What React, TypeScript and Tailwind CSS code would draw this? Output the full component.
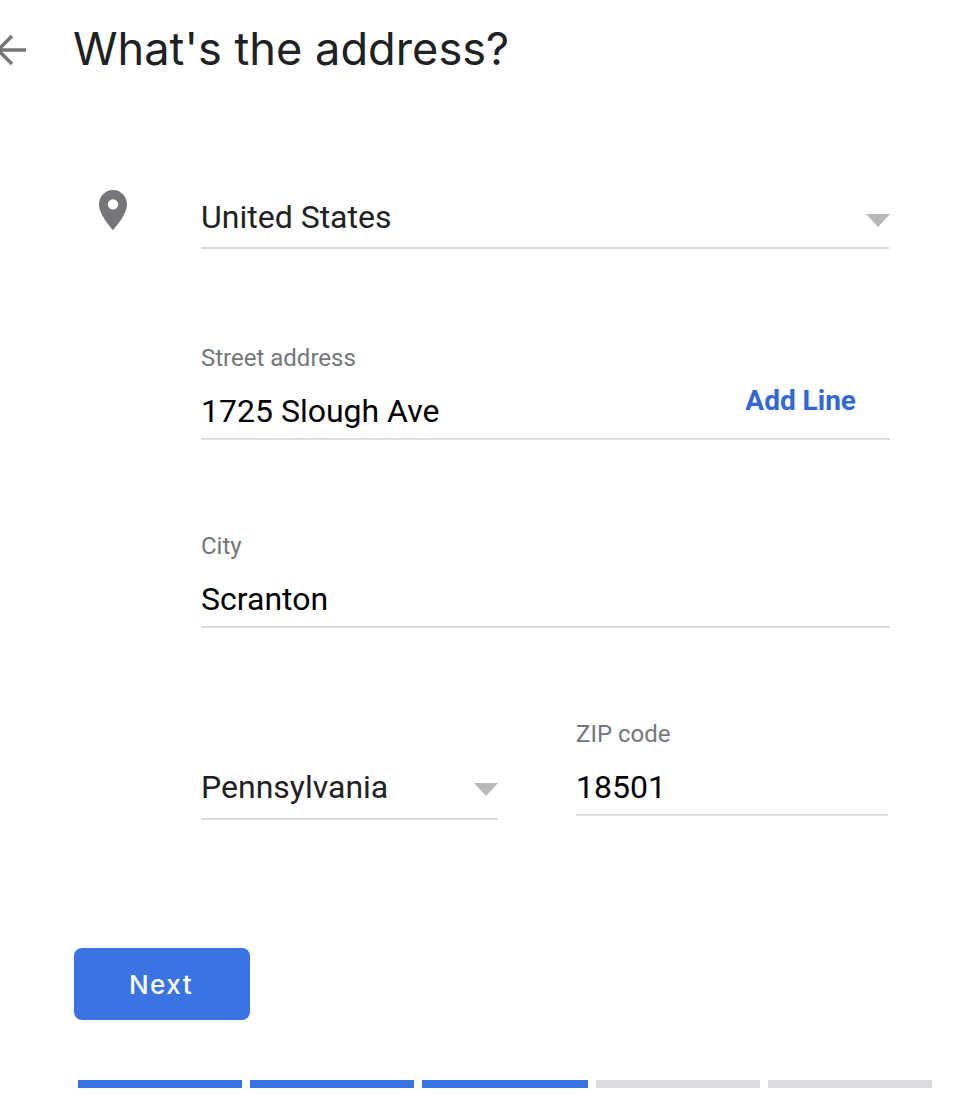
const PROGRESS = [
  { width: 'w-[164px]', done: true },
  { width: 'w-[164px]', done: true },
  { width: 'w-[166px]', done: true },
  { width: 'w-[164px]', done: false },
  { width: 'w-[164px]', done: false },
];

function Caret() {
  return (
    <svg width="24" height="13" viewBox="0 0 24 13" className="shrink-0">
      <path d="M0 0h24L12 13z" fill="#b8b8b8" />
    </svg>
  );
}

function BackArrow() {
  return (
    <svg width="26" height="32" viewBox="0 0 26 32" className="shrink-0">
      <path d="M26 16H0M12 2L-2 16l14 14" fill="none" stroke="#75767a" strokeWidth="3.5" />
    </svg>
  );
}

function Pin() {
  return (
    <svg width="28" height="40" viewBox="0 0 28 40">
      <path
        fillRule="evenodd"
        d="M14 0C6.3 0 0 6.4 0 14.4 0 25.2 14 40 14 40s14-14.8 14-25.6C28 6.4 21.7 0 14 0zm0 19.6a5.2 5.2 0 1 1 0-10.4 5.2 5.2 0 0 1 0 10.4z"
        fill="#75767a"
      />
    </svg>
  );
}

function Field({ label, value, children }: { label: string; value: string; children?: React.ReactNode }) {
  return (
    <div className="flex h-[95px] flex-col border-b-2 border-[#dcdce0]">
      <p className="-mt-px h-[45px] text-[24px] leading-[28px] text-[#75767a]">{label}</p>
      <div className="flex items-start justify-between">
        <span className="text-[32px] leading-[44px] text-black">{value}</span>
        {children}
      </div>
    </div>
  );
}

export default function App() {
  return (
    <div className="h-[1110px] w-[962px] bg-white font-['Roboto',sans-serif]">
      <header className="flex h-[98px] items-start pt-[20px]">
        <span className="mt-[14px]">
          <BackArrow />
        </span>
        <h1 className="ml-[47px] font-['Inter',sans-serif] text-[45.2px] leading-[58px] text-[#202124]">
          What's the address?
        </h1>
      </header>

      <div className="ml-[99px] mt-[92px] flex">
        <div className="w-[102px] shrink-0">
          <Pin />
        </div>
        <div className="flex h-[59px] w-[688px] items-start justify-between border-b-2 border-[#dcdce0]">
          <span className="text-[32px] leading-[54px] text-[#202124]">United States</span>
          <span className="mr-[-1px] mt-[24px]">
            <Caret />
          </span>
        </div>
      </div>

      <div className="ml-[201px] mt-[96px] w-[689px]">
        <Field label="Street address" value="1725 Slough Ave">
          <span className="mr-[34px] mt-[-6px] text-[28px] font-bold leading-[36px] text-[#3367d6]">Add Line</span>
        </Field>
      </div>

      <div className="ml-[201px] mt-[93px] w-[689px]">
        <Field label="City" value="Scranton" />
      </div>

      <div className="ml-[201px] mt-[93px] flex items-start gap-[78px]">
        <div className="mt-[44px] flex h-[55px] w-[297px] items-start justify-between border-b-2 border-[#dcdce0]">
          <span className="text-[32px] leading-[44px] text-[#202124]">Pennsylvania</span>
          <span className="mt-[18px]">
            <Caret />
          </span>
        </div>
        <div className="w-[312px]">
          <Field label="ZIP code" value="18501" />
        </div>
      </div>

      <button className="ml-[74px] mt-[128px] h-[72px] w-[176px] rounded-[8px] bg-[#3b73e3] pr-[2px] font-['Inter',sans-serif] text-[26px] font-medium tracking-[1.5px] text-white">
        Next
      </button>

      <div className="ml-[78px] mt-[60px] flex gap-[8px]">
        {PROGRESS.map((step, i) => (
          <div key={i} className={`h-[8px] ${step.width} ${step.done ? 'bg-[#3b73e3]' : 'bg-[#dcdce0]'}`} />
        ))}
      </div>
    </div>
  );
}
